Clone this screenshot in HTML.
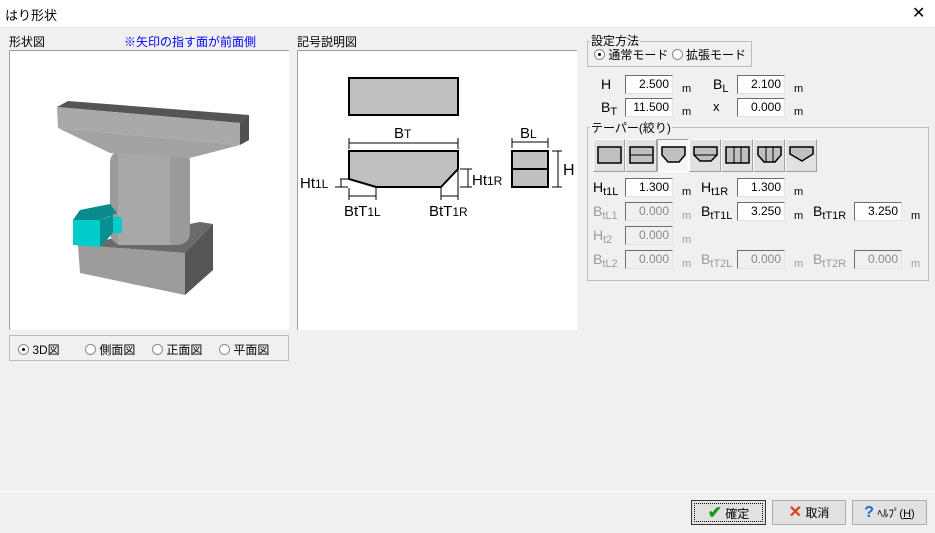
<!DOCTYPE html>
<html><head><meta charset="utf-8"><style>
*{margin:0;padding:0;box-sizing:border-box}
body{width:935px;height:533px;background:#f0f0f0;position:relative;overflow:hidden;font-family:"Liberation Sans","Noto Sans CJK JP",sans-serif;font-size:12px;color:#000}
.a{position:absolute}
.inp{position:absolute;width:48px;height:19px;background:#fff;border-top:1px solid #6d6d6d;border-left:1px solid #6d6d6d;border-right:1px solid #e3e3e3;border-bottom:1px solid #e3e3e3;text-align:right;padding-right:3px;font-size:12px;line-height:17px}
.dis{background:#f0f0f0;color:#8a8a8a}
.m{position:absolute;font-size:11px}
.g{color:#9a9a9a}
.lbl{position:absolute;font-size:14px}
.lbl sub{font-size:11px;vertical-align:-3px}
.grp{position:absolute;border:1px solid #bcbcbc}
.tb{position:absolute;width:32px;height:33px;background:#e1e1e1;border-right:1px solid #a0a0a0;border-bottom:1px solid #a0a0a0;border-left:1px solid #fff;border-top:1px solid #fff}
.tb svg{position:absolute;left:3px;top:6px}
.btn{position:absolute;height:25px;background:#e1e1e1;border:1px solid #adadad;font-size:12px;text-align:center;line-height:23px}
.rad{display:inline-block;width:11px;height:11px;border:1px solid #8a8a8a;border-radius:50%;background:#fff;vertical-align:-1px;position:relative}
.rad.on::after{content:"";position:absolute;left:3px;top:3px;width:3px;height:3px;background:#000;border-radius:50%}
</style></head><body>
<div class="a" style="left:0;top:0;width:935px;height:27px;background:#fff"></div>
<div class="a" style="left:5px;top:5px;font-size:13px">はり形状</div>
<div class="a" style="left:912px;top:3px;font-size:16px">✕</div>
<div class="a" style="left:0;top:27px;width:935px;height:1px;background:#e8e8e8"></div>

<div class="a" style="left:9px;top:33px;font-size:12px">形状図</div>
<div class="a" style="left:124px;top:33px;font-size:12px;color:#0000ff">※矢印の指す面が前面側</div>
<div class="a" style="left:9px;top:50px;width:280px;height:280px;background:#fff;border-top:1px solid #a0a0a0;border-left:1px solid #a0a0a0"></div>
<svg class="a" style="left:0;top:0" width="290" height="330">
<polygon points="78,245 200,222 213,224 185,253" fill="#6a6a6a"/>
<polygon points="78,245 185,253 185,295 80,273" fill="#9c9c9c"/>
<polygon points="185,253 213,224 213,270 185,295" fill="#555"/>
<rect x="110" y="150" width="80" height="95" rx="12" fill="#9a9a9a"/>
<rect x="118" y="150" width="52" height="95" fill="#a8a8a8"/>
<polygon points="58,128 240,145 190,158 110,153" fill="#a3a3a3"/>
<polygon points="57,107 68,101 249,115 240,123" fill="#555"/>
<polygon points="57,107 240,123 240,145 58,128" fill="#a9a9a9"/>
<polygon points="240,123 249,115 249,140 240,145" fill="#505050"/>
<polygon points="80,210 110,204 117,213 100,220 73,220" fill="#0a8a8a"/>
<polygon points="100,220 113,215 113,233 100,247" fill="#089090"/>
<polygon points="73,220 100,220 100,247 73,245" fill="#00cccc"/>
<polygon points="113,217 122,217 122,233 113,233" fill="#00cccc"/>
</svg>

<div class="a" style="left:297px;top:33px">記号説明図</div>
<div class="a" style="left:297px;top:50px;width:280px;height:280px;background:#fff;border-top:1px solid #a0a0a0;border-left:1px solid #a0a0a0"></div>
<svg class="a" style="left:290px;top:30px" width="300" height="200" font-family="Liberation Sans" font-size="15">
<rect x="59" y="48" width="109" height="37" fill="#c0c0c0" stroke="#000" stroke-width="2"/>
<polygon points="59,121 168,121 168,139 151,157 86,157 59,149" fill="#c0c0c0" stroke="#000" stroke-width="2"/>
<line x1="59" y1="113" x2="168" y2="113" stroke="#000"/>
<text x="104" y="108">B<tspan font-size="12">T</tspan></text>
<line x1="59" y1="166" x2="86" y2="166" stroke="#000"/>
<line x1="59" y1="158" x2="59" y2="170" stroke="#000"/>
<line x1="86" y1="158" x2="86" y2="170" stroke="#000"/>
<line x1="151" y1="166" x2="168" y2="166" stroke="#000"/>
<line x1="168" y1="140" x2="168" y2="170" stroke="#000"/>
<line x1="151" y1="158" x2="151" y2="170" stroke="#000"/>
<line x1="59" y1="108" x2="59" y2="119" stroke="#000"/>
<line x1="168" y1="108" x2="168" y2="119" stroke="#000"/>
<line x1="50" y1="149" x2="58" y2="149" stroke="#000"/>
<line x1="45" y1="157" x2="58" y2="157" stroke="#000"/>
<line x1="51" y1="149" x2="51" y2="157" stroke="#000"/>
<text x="10" y="158">Ht<tspan font-size="12">1L</tspan></text>
<line x1="170" y1="139" x2="182" y2="139" stroke="#000"/>
<line x1="170" y1="157" x2="182" y2="157" stroke="#000"/>
<line x1="178" y1="139" x2="178" y2="157" stroke="#000"/>
<text x="182" y="155">Ht<tspan font-size="12">1R</tspan></text>
<text x="54" y="186">BtT<tspan font-size="12">1L</tspan></text>
<text x="139" y="186">BtT<tspan font-size="12">1R</tspan></text>
<rect x="222" y="121" width="36" height="36" fill="#c0c0c0" stroke="#000" stroke-width="2"/>
<line x1="222" y1="139" x2="258" y2="139" stroke="#000" stroke-width="2"/>
<line x1="222" y1="112" x2="258" y2="112" stroke="#000"/>
<line x1="222" y1="108" x2="222" y2="118" stroke="#000"/>
<line x1="258" y1="108" x2="258" y2="118" stroke="#000"/>
<text x="230" y="108">B<tspan font-size="12">L</tspan></text>
<line x1="262" y1="121" x2="272" y2="121" stroke="#000"/>
<line x1="262" y1="157" x2="272" y2="157" stroke="#000"/>
<line x1="268" y1="121" x2="268" y2="157" stroke="#000"/>
<text x="273" y="145" font-size="16">H</text>
</svg>

<div class="grp" style="left:9px;top:335px;width:280px;height:26px"></div>
<div class="a" style="left:18px;top:341px;font-size:12px"><span class="rad on"></span> 3D図</div>
<div class="a" style="left:85px;top:341px"><span class="rad"></span> 側面図</div>
<div class="a" style="left:152px;top:341px"><span class="rad"></span> 正面図</div>
<div class="a" style="left:219px;top:341px"><span class="rad"></span> 平面図</div>

<div class="grp" style="left:587px;top:41px;width:165px;height:26px"></div>
<div class="a" style="left:590px;top:32px;background:#f0f0f0;padding:0 1px">設定方法</div>
<div class="a" style="left:594px;top:46px"><span class="rad on"></span> 通常モード <span class="rad"></span> 拡張モード</div>

<div class="lbl" style="left:601px;top:76px">H</div>
<div class="inp" style="left:625px;top:75px">2.500</div><div class="m" style="left:682px;top:83px">m</div>
<div class="lbl" style="left:713px;top:76px">B<sub>L</sub></div>
<div class="inp" style="left:737px;top:75px">2.100</div><div class="m" style="left:794px;top:83px">m</div>
<div class="lbl" style="left:601px;top:99px">B<sub>T</sub></div>
<div class="inp" style="left:625px;top:98px">11.500</div><div class="m" style="left:682px;top:106px">m</div>
<div class="lbl" style="left:713px;top:99px;font-size:13px">x</div>
<div class="inp" style="left:737px;top:98px">0.000</div><div class="m" style="left:794px;top:106px">m</div>

<div class="grp" style="left:587px;top:127px;width:342px;height:154px"></div>
<div class="a" style="left:590px;top:119px;background:#f0f0f0;padding:0 1px">テーパー(絞り)</div>
<div class="tb" style="left:593px;top:139px"><svg width="26" height="20"><rect x="1" y="1" width="23" height="16" fill="#c0c0c0" stroke="#000" stroke-width="1.5"/></svg></div>
<div class="tb" style="left:625px;top:139px"><svg width="26" height="20"><rect x="1" y="1" width="23" height="16" fill="#c0c0c0" stroke="#000" stroke-width="1.5"/><line x1="1" y1="9" x2="24" y2="9" stroke="#000"/></svg></div>
<div class="tb" style="left:657px;top:139px;background:#f5f5f5;border-color:#a0a0a0 #fff #fff #a0a0a0"><svg width="26" height="20"><polygon points="1,1 24,1 24,9 18,16 7,16 1,9" fill="#c0c0c0" stroke="#000" stroke-width="1.5"/></svg></div>
<div class="tb" style="left:689px;top:139px"><svg width="26" height="20"><polygon points="1,1 24,1 24,9 18,15 7,15 1,9" fill="#c0c0c0" stroke="#000" stroke-width="1.5"/><line x1="1" y1="9" x2="24" y2="9" stroke="#000"/></svg></div>
<div class="tb" style="left:721px;top:139px"><svg width="26" height="20"><rect x="1" y="1" width="23" height="16" fill="#c0c0c0" stroke="#000" stroke-width="1.5"/><line x1="9" y1="1" x2="9" y2="17" stroke="#000"/><line x1="16" y1="1" x2="16" y2="17" stroke="#000"/></svg></div>
<div class="tb" style="left:753px;top:139px"><svg width="26" height="20"><polygon points="1,1 24,1 24,9 18,16 7,16 1,9" fill="#c0c0c0" stroke="#000" stroke-width="1.5"/><line x1="9" y1="1" x2="9" y2="16" stroke="#000"/><line x1="16" y1="1" x2="16" y2="16" stroke="#000"/></svg></div>
<div class="tb" style="left:785px;top:139px"><svg width="26" height="20"><polygon points="1,1 24,1 24,8 13,15 1,8" fill="#c0c0c0" stroke="#000" stroke-width="1.5"/></svg></div>

<div class="lbl" style="left:593px;top:179px">H<sub>t1L</sub></div>
<div class="inp" style="left:625px;top:178px">1.300</div><div class="m" style="left:682px;top:186px">m</div>
<div class="lbl" style="left:701px;top:179px">H<sub>t1R</sub></div>
<div class="inp" style="left:737px;top:178px">1.300</div><div class="m" style="left:794px;top:186px">m</div>

<div class="lbl g" style="left:593px;top:203px">B<sub>tL1</sub></div>
<div class="inp dis" style="left:625px;top:202px">0.000</div><div class="m g" style="left:682px;top:210px">m</div>
<div class="lbl" style="left:701px;top:203px">B<sub>tT1L</sub></div>
<div class="inp" style="left:737px;top:202px">3.250</div><div class="m" style="left:794px;top:210px">m</div>
<div class="lbl" style="left:813px;top:203px">B<sub>tT1R</sub></div>
<div class="inp" style="left:854px;top:202px">3.250</div><div class="m" style="left:911px;top:210px">m</div>

<div class="lbl g" style="left:593px;top:227px">H<sub>t2</sub></div>
<div class="inp dis" style="left:625px;top:226px">0.000</div><div class="m g" style="left:682px;top:234px">m</div>

<div class="lbl g" style="left:593px;top:251px">B<sub>tL2</sub></div>
<div class="inp dis" style="left:625px;top:250px">0.000</div><div class="m g" style="left:682px;top:258px">m</div>
<div class="lbl g" style="left:701px;top:251px">B<sub>tT2L</sub></div>
<div class="inp dis" style="left:737px;top:250px">0.000</div><div class="m g" style="left:794px;top:258px">m</div>
<div class="lbl g" style="left:813px;top:251px">B<sub>tT2R</sub></div>
<div class="inp dis" style="left:854px;top:250px">0.000</div><div class="m g" style="left:911px;top:258px">m</div>

<div class="a" style="left:0;top:491px;width:935px;height:1px;background:#fff"></div>
<div class="btn" style="left:691px;top:500px;width:75px;border:1px solid #333;outline:1px dotted #000;outline-offset:-4px"><span style="color:#1a9a1a;font-size:17px;font-weight:bold">✔</span> 確定</div>
<div class="btn" style="left:772px;top:500px;width:74px"><span style="color:#e03a1a;font-size:16px;font-weight:bold">✕</span> 取消</div>
<div class="btn" style="left:852px;top:500px;width:75px"><span style="color:#1a6ad0;font-size:16px;font-weight:bold">?</span> <span style="font-size:11px">ﾍﾙﾌﾟ(<u>H</u>)</span></div>
</body></html>
